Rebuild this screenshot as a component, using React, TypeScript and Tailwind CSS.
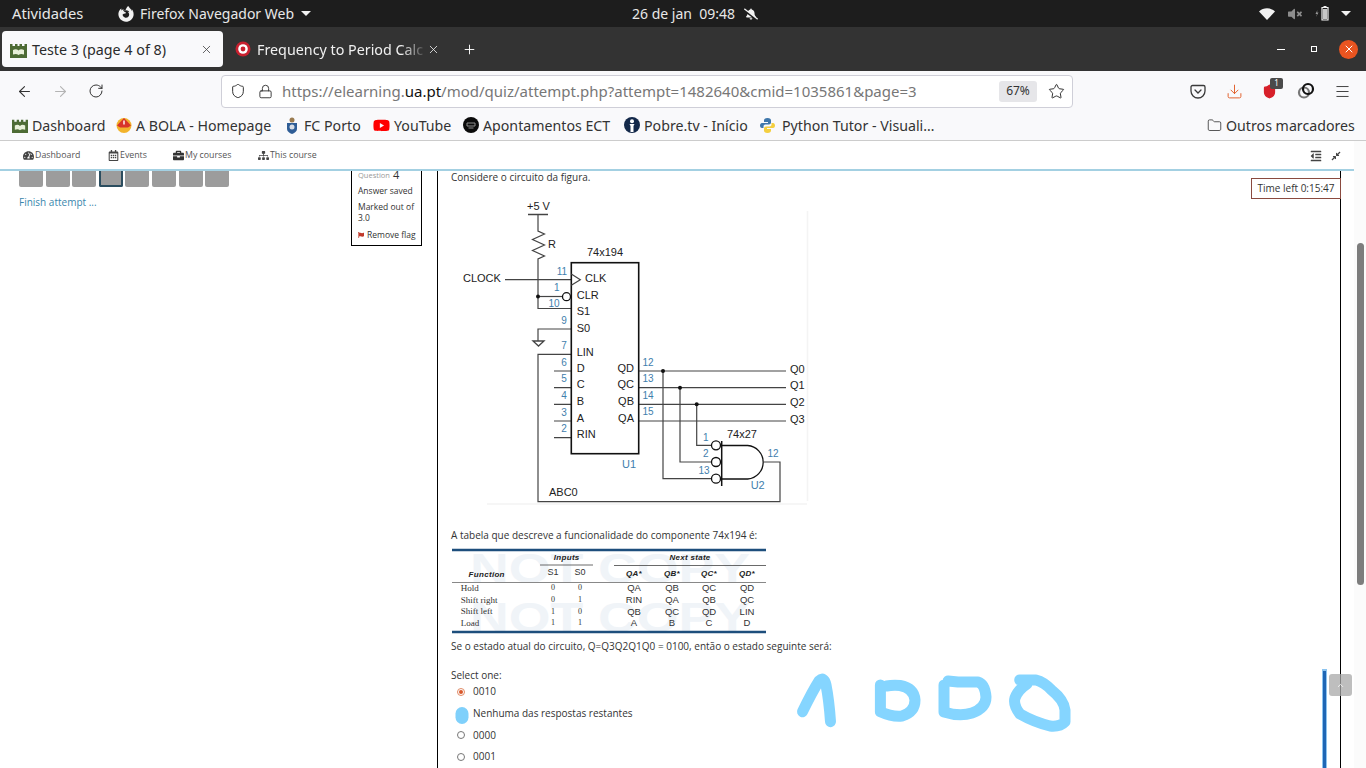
import React from "react";
import { ArrowLeft, ArrowRight, RotateCw, Shield, Lock, Star, Download, Menu, X, Plus, Folder, ChevronUp } from "lucide-react";
import { FaTachometerAlt, FaRegCalendarAlt, FaBriefcase, FaSitemap, FaOutdent, FaCompressAlt, FaFirefoxBrowser, FaVolumeMute, FaBellSlash, FaYoutube, FaFlag } from "react-icons/fa";

const MoodleIcon = ({ size = 17 }: { size?: number }) => (
  <svg width={size} height={size} viewBox="0 0 17 17">
    <path d="M0 3h2.500v2H5V3h2.500v2h2V3H12v2h2.500V3H17v14H0z" fill="#4d6b34" />
    <path d="M3 9c2-1 4-1 5.500 0.500C10 8 12 8 14 9v4.500c-2-.8-4-.8-5.500.5-1.500-1.300-3.500-1.300-5.500-.5z" fill="#e8efd8" />
  </svg>
);

const TargetIcon = () => (
  <svg width="16" height="16" viewBox="0 0 16 16">
    <circle cx="8" cy="8" r="7.500" fill="#c8202f" />
    <circle cx="8" cy="8" r="4.800" fill="#fff" />
    <circle cx="8" cy="8" r="2.400" fill="#c8202f" />
  </svg>
);

const BolaIcon = () => (
  <svg width="16" height="16" viewBox="0 0 16 16">
    <circle cx="8" cy="8.500" r="7.500" fill="#f2b32c" />
    <path d="M1 8.500 8 1l7 7.500-3 2H4z" fill="#d8352a" />
    <path d="M7.300 3.500h1.400v4H7.300z" fill="#fff" />
  </svg>
);

const PortoIcon = () => (
  <svg width="12" height="17" viewBox="0 0 12 17">
    <circle cx="6" cy="3" r="2.500" fill="#9a7b50" />
    <path d="M1 6h10v6c0 2.500-2.500 4-5 5-2.500-1-5-2.500-5-5z" fill="#2f5d96" />
    <circle cx="6" cy="10" r="2.500" fill="#d7dde6" />
  </svg>
);

const ApontamentosIcon = () => (
  <svg width="16" height="16" viewBox="0 0 16 16">
    <circle cx="8" cy="8" r="8" fill="#0b0b0b" />
    <path d="M4 6h8v3H4zM5.500 11h5" stroke="#8d8d8d" strokeWidth="1" fill="none" />
  </svg>
);

const PobreIcon = () => (
  <svg width="16" height="16" viewBox="0 0 16 16">
    <circle cx="8" cy="8" r="8" fill="#14294a" />
    <circle cx="8" cy="4.200" r="2" fill="#fff" />
    <path d="M5.500 7h5l-1 2v6h-3V9z" fill="#fff" />
  </svg>
);

const PythonIcon = () => (
  <svg width="17" height="17" viewBox="0 0 17 17">
    <path d="M8.500 1C6 1 5 2 5 3.500V5h4v1H3C1.500 6 1 7.500 1 8.500S1.500 11 3 11h1.500V9.500C4.500 8 5.500 7.500 7 7.500h3c1 0 2-.8 2-2v-2C12 2 11 1 8.500 1z" fill="#3f77ab" />
    <path d="M8.500 16c2.500 0 3.500-1 3.500-2.500V12H8v-1h6c1.500 0 2-1.500 2-2.500S15.500 6 14 6h-1.500v1.500c0 1.500-1 2-2.500 2H7c-1 0-2 .8-2 2v2C5 15 6 16 8.500 16z" fill="#f4cf3f" />
  </svg>
);

const PocketIcon = () => (
  <svg width="16" height="15" viewBox="0 0 16 15" fill="none" stroke="#3a3a3a" strokeWidth="1.300">
    <path d="M2.500 1.500h11a1.500 1.500 0 0 1 1.500 1.500v4a7 7 0 0 1-14 0V3a1.500 1.500 0 0 1 1.500-1.500z" />
    <path d="M5 6l3 3 3-3" strokeLinecap="round" />
  </svg>
);

const LinkedCircles = () => (
  <svg width="18" height="18" viewBox="0 0 18 18" fill="none" strokeWidth="2.200">
    <circle cx="7" cy="10.500" r="5" stroke="#777" />
    <circle cx="11" cy="7" r="5" stroke="#111" />
  </svg>
);

const WifiIcon = () => (
  <svg width="16" height="12" viewBox="0 0 16 12">
    <path d="M0 3.500C4.500-.8 11.500-.8 16 3.500L8 12z" fill="#f2f2f2" />
  </svg>
);

const BatteryIcon = () => (
  <svg width="16" height="15" viewBox="0 0 16 15">
    <path d="M2.500 4 0.500 8h1.500L1 11l2.500-4.500H2z" fill="#9a9a9a" />
    <path d="M7 1.500h6V14H7z" fill="none" stroke="#f2f2f2" strokeWidth="1.200" />
    <path d="M8.500 0h3v1.500h-3z" fill="#f2f2f2" />
    <path d="M8 3h4v10H8z" fill="#f2f2f2" opacity="0.800" />
  </svg>
);

const Caret = () => <span className="inline-block border-x-[5px] border-t-[5px] border-x-transparent border-t-[#f2f2f2]" />;

const Pin = ({ x, y, n }: { x: number; y: number; n: string }) => (
  <text x={x} y={y} textAnchor="middle" dominantBaseline="middle" fontSize="10" fill="#3f80ad">{n}</text>
);

const Lbl = ({ x, y, t, end }: { x: number; y: number; t: string; end?: boolean }) => (
  <text x={x} y={y} textAnchor={end ? "end" : "start"} dominantBaseline="middle" fontSize="11" fill="#222">{t}</text>
);

const Circuit = () => (
  <svg width="370" height="320" viewBox="451 190 370 320" className="block -mt-px" fontFamily="'Liberation Sans', Arial, sans-serif">
    <path d="M807.500 210v290M487 503h320" stroke="#f4f4f4" strokeWidth="1.500" fill="none" />
    <g fill="none" stroke="#444" strokeWidth="1.200">
      <path d="M528 213.500h20" strokeWidth="1.500" />
      <path d="M538 213v17l6.500 3-12 5.500 12 5.500-12 5.500 12 5.500-6.500 3v49.500h33" />
      <path d="M538 295.500h24" />
      <path d="M505 278.700h66" />
      <path d="M571 328h-33v12" />
      <path d="M533 340h11l-5.500 5z" strokeWidth="1.300" />
      <path d="M571 353.300h-33v147.400h242V461h-16" />
      <path d="M554 370h17M554 386.700h17M554 403.300h17M554 420h17M554 436.700h17" />
      <path d="M638.700 370H786M638.700 386.700H786M638.700 403.300H786M638.700 420H786" />
      <path d="M663 370v107.700h48.500M680 386.700V461h31.500M696.700 403.300v41h14.800" />
      <rect x="571.300" y="261.700" width="67.400" height="191" stroke="#111" strokeWidth="1.600" />
      <path d="M571.300 273l9 5.700-9 5.500" />
      <circle cx="566.500" cy="295.700" r="4" stroke="#111" strokeWidth="1.300" />
      <circle cx="716" cy="444.300" r="4.500" stroke="#111" strokeWidth="1.300" />
      <circle cx="716" cy="461" r="4.500" stroke="#111" strokeWidth="1.300" />
      <circle cx="716" cy="477.700" r="4.500" stroke="#111" strokeWidth="1.300" />
      <path d="M721.700 440v45" stroke="#111" strokeWidth="1.500" />
      <path d="M721.700 444.500h26a16.800 16.800 0 0 1 0 33.500h-26" stroke="#111" strokeWidth="1.300" />
    </g>
    <g fill="#111">
      <circle cx="538" cy="295.500" r="2" />
      <circle cx="663" cy="370" r="2" />
      <circle cx="680" cy="386.700" r="2" />
      <circle cx="696.700" cy="403.300" r="2" />
    </g>
    <Lbl x={527} y={206} t="+5 V" />
    <Lbl x={548} y={244} t="R" />
    <Lbl x={587} y={252} t="74x194" />
    <Lbl x={463} y={278} t="CLOCK" />
    <Lbl x={585} y={278} t="CLK" />
    <Lbl x={576.700} y={295} t="CLR" />
    <Lbl x={576.700} y={311.500} t="S1" />
    <Lbl x={576.700} y={328} t="S0" />
    <Lbl x={576.700} y={352} t="LIN" />
    <Lbl x={576.700} y={368} t="D" />
    <Lbl x={576.700} y={384.500} t="C" />
    <Lbl x={576.700} y={401} t="B" />
    <Lbl x={576.700} y={418} t="A" />
    <Lbl x={576.700} y={434.500} t="RIN" />
    <Lbl x={634} y={368} t="QD" end />
    <Lbl x={634} y={384.500} t="QC" end />
    <Lbl x={634} y={401} t="QB" end />
    <Lbl x={634} y={418} t="QA" end />
    <Lbl x={790} y={369.500} t="Q0" />
    <Lbl x={790} y={385.500} t="Q1" />
    <Lbl x={790} y={402} t="Q2" />
    <Lbl x={790} y={419} t="Q3" />
    <Lbl x={727} y={434} t="74x27" />
    <Lbl x={549} y={492} t="ABC0" />
    <text x={629} y={464} textAnchor="middle" dominantBaseline="middle" fontSize="11" fill="#3f80ad">U1</text>
    <text x={757.700} y={485} textAnchor="middle" dominantBaseline="middle" fontSize="11" fill="#3f80ad">U2</text>
    <Pin x={562} y={271} n="11" />
    <Pin x={556.700} y={287} n="1" />
    <Pin x={554} y={303.700} n="10" />
    <Pin x={564} y={320} n="9" />
    <Pin x={564} y={345} n="7" />
    <Pin x={564} y={362} n="6" />
    <Pin x={564} y={378} n="5" />
    <Pin x={564} y={395} n="4" />
    <Pin x={564} y={412} n="3" />
    <Pin x={564} y={428} n="2" />
    <Pin x={648} y={362} n="12" />
    <Pin x={648} y={378} n="13" />
    <Pin x={648} y={395} n="14" />
    <Pin x={648} y={411} n="15" />
    <Pin x={705.700} y={437} n="1" />
    <Pin x={705.700} y={453} n="2" />
    <Pin x={704} y={470} n="13" />
    <Pin x={773} y={453} n="12" />
  </svg>
);

const tableRows = [
  { y: 588.500, f: "Hold", s: ["0", "0"], q: ["QA", "QB", "QC", "QD"] },
  { y: 600.500, f: "Shift right", s: ["0", "1"], q: ["RIN", "QA", "QB", "QC"] },
  { y: 612, f: "Shift left", s: ["1", "0"], q: ["QB", "QC", "QD", "LIN"] },
  { y: 623.500, f: "Load", s: ["1", "1"], q: ["A", "B", "C", "D"] },
];
const sCols = [553, 580];
const qCols = [634, 672, 709, 747];

const FunctionTable = () => (
  <svg width="330" height="90" viewBox="451 546 330 90" className="block mt-[5px]" fontFamily="'Liberation Sans', Arial, sans-serif">
    <g fontSize="42" fontWeight="700" fill="#f0f4f8">
      <text x="470" y="583" textLength="280" lengthAdjust="spacingAndGlyphs">NOT COPY</text>
      <text x="470" y="632" textLength="280" lengthAdjust="spacingAndGlyphs">NOT COPY</text>
    </g>
    <path d="M452 550h314M452 632h314" stroke="#1d4e7c" strokeWidth="2.500" />
    <path d="M540 565h53M614 565.500h152" stroke="#444" strokeWidth="0.800" />
    <path d="M452 582.500h314" stroke="#888" strokeWidth="1" />
    <g fontSize="8" fontWeight="700" fontStyle="italic" fill="#222" textAnchor="middle" dominantBaseline="middle" letterSpacing="0.300">
      <text x="566.700" y="557.500">Inputs</text>
      <text x="690" y="557.500">Next state</text>
      <text x="486.700" y="574.500">Function</text>
      {qCols.map((x, i) => (
        <text key={x} x={x} y="574">{["QA*", "QB*", "QC*", "QD*"][i]}</text>
      ))}
    </g>
    <g fontSize="9" fill="#333" textAnchor="middle" dominantBaseline="middle">
      <text x={sCols[0]} y="573">S1</text>
      <text x={sCols[1]} y="573">S0</text>
    </g>
    {tableRows.map((r) => (
      <g key={r.f} dominantBaseline="middle">
        <text x="460.700" y={r.y} fontSize="9" fontFamily="'Liberation Serif', serif" fill="#333">{r.f}</text>
        {r.s.map((v, i) => (
          <text key={i} x={sCols[i]} y={r.y} fontSize="8" textAnchor="middle" fontFamily="'Liberation Serif', serif" fill="#333">{v}</text>
        ))}
        {r.q.map((v, i) => (
          <text key={i} x={qCols[i]} y={r.y} fontSize="9.500" textAnchor="middle" fill="#333">{v}</text>
        ))}
      </g>
    ))}
  </svg>
);

const Radio = ({ selected }: { selected?: boolean }) => (
  <span className={`flex h-[8px] w-[8px] items-center justify-center rounded-full border bg-white ${selected ? "border-[#e08a66]" : "border-[#777]"}`}>
    {selected && <span className="h-[4px] w-[4px] rounded-full bg-[#d9582b]" />}
  </span>
);

const options = [
  { label: "0010", selected: true },
  { label: "Nenhuma das respostas restantes" },
  { label: "0000" },
  { label: "0001" },
];

const Bookmark = ({ icon, text, className }: { icon: React.ReactNode; text: string; className: string }) => (
  <div className={`flex items-center ${className}`}>
    {icon}
    <span>{text}</span>
  </div>
);

const NavItem = ({ icon, text, className }: { icon: React.ReactNode; text: string; className: string }) => (
  <div className={`flex items-center gap-[1px] ${className}`}>
    {icon}
    <span>{text}</span>
  </div>
);

export default function App() {
  const chrome = { fontFamily: "'Noto Sans', sans-serif" };
  return (
    <div className="relative flex h-[768px] w-[1366px] flex-col overflow-hidden bg-white" style={chrome}>
      {/* gnome top bar */}
      <div className="flex h-[27px] shrink-0 items-center bg-[#1d1d1d] text-[14px] text-[#e8e8e8]">
        <span className="ml-[12px] w-[72px] text-[14.700px]">Atividades</span>
        <FaFirefoxBrowser className="ml-[34px] text-[16px] text-[#f2f2f2]" />
        <span className="ml-[6px] w-[155px] whitespace-nowrap">Firefox Navegador Web</span>
        <span className="ml-[6px] flex"><Caret /></span>
        <span className="ml-[321px] w-[102px] whitespace-nowrap text-[14px]">26 de jan&nbsp;&nbsp;09:48</span>
        <FaBellSlash className="ml-[10px] text-[14px] text-[#f2f2f2]" />
        <span className="ml-auto"><WifiIcon /></span>
        <FaVolumeMute className="ml-[13px] text-[14px] text-[#8d8d8d]" />
        <span className="ml-[13px]"><BatteryIcon /></span>
        <span className="ml-[10px] mr-[15px] flex"><Caret /></span>
      </div>

      {/* tab strip */}
      <div className="flex h-[44px] shrink-0 items-center bg-[#333333] text-[14.300px]">
        <div className="ml-[2px] flex h-[36px] w-[221px] items-center rounded-[4px] bg-[#f9f9fb] pl-[8px] pr-[10px] text-[#2b2b2b]">
          <MoodleIcon />
          <span className="ml-[5px] flex-1 pt-px">Teste 3 (page 4 of 8)</span>
          <X size={13} strokeWidth={1.500} className="text-[#444]" />
        </div>
        <div className="ml-[12px] flex w-[212px] items-center text-[#f0f0f0]">
          <TargetIcon />
          <span className="ml-[6px] w-[170px] overflow-hidden whitespace-nowrap pt-px [mask-image:linear-gradient(to_right,black_85%,transparent)]">Frequency to Period Calc</span>
          <X size={13} strokeWidth={1.500} />
        </div>
        <Plus size={15} strokeWidth={1.500} className="ml-[15px] text-white" />
        <div className="ml-auto flex items-center">
          <span className="block h-[1px] w-[8px] bg-white" />
          <span className="relative ml-[26px] block h-[6px] w-[6px] border border-white" />
          <span className="ml-[22px] mr-[8px] flex h-[19px] w-[19px] items-center justify-center rounded-full bg-[#e95420] text-white">
            <X size={12} strokeWidth={2} />
          </span>
        </div>
      </div>

      {/* url toolbar */}
      <div className="flex h-[40px] shrink-0 items-center bg-[#f9f9fb] text-[#333]">
        <ArrowLeft size={17} strokeWidth={1.500} className="ml-[16px]" />
        <ArrowRight size={17} strokeWidth={1.500} className="ml-[19px] text-[#b4b4b4]" />
        <RotateCw size={16} strokeWidth={1.500} className="ml-[19px]" />
        <div className="ml-[117px] flex h-[33px] w-[852px] items-center rounded-[4px] border border-[#cfcfd8] bg-white">
          <Shield size={16} strokeWidth={1.500} className="ml-[8px]" />
          <Lock size={15} strokeWidth={1.500} className="ml-[12px]" />
          <span className="ml-[9px] whitespace-nowrap text-[15px] text-[#777]">
            https://elearning.<span className="text-[#111]">ua.pt</span>/mod/quiz/attempt.php?attempt=1482640&amp;cmid=1035861&amp;page=3
          </span>
          <span className="ml-auto flex h-[21px] w-[38px] items-center justify-center rounded-[3px] bg-[#e6e6e9] text-[12px]">67%</span>
          <Star size={17} strokeWidth={1.300} className="ml-[11px] mr-[7px] text-[#222]" />
        </div>
        <span className="ml-[117px]"><PocketIcon /></span>
        <Download size={17} strokeWidth={1.400} className="ml-[20px] text-[#e2622f]" />
        <div className="relative ml-[19px]">
          <Shield size={15} className="fill-[#d7202a] text-[#d7202a]" />
          <span className="absolute -right-[6px] -top-[6px] flex h-[11px] w-[13px] items-center justify-center rounded-[2px] bg-[#4a4a4a] text-[8px] text-white">1</span>
        </div>
        <span className="ml-[20px]"><LinkedCircles /></span>
        <Menu size={17} strokeWidth={1.300} className="ml-[19px]" />
      </div>

      {/* bookmarks */}
      <div className="flex h-[30px] shrink-0 items-center border-b border-[#cccccc] bg-[#f9f9fb] text-[14.200px] text-[#333]">
        <Bookmark icon={<MoodleIcon size={16} />} text="Dashboard" className="ml-[12px] w-[104px] gap-[4px]" />
        <Bookmark icon={<BolaIcon />} text="A BOLA - Homepage" className="w-[170px] gap-[4px]" />
        <Bookmark icon={<PortoIcon />} text="FC Porto" className="w-[87px] gap-[6px]" />
        <Bookmark icon={<FaYoutube className="text-[17px] text-[#f00]" />} text="YouTube" className="w-[90px] gap-[4px]" />
        <Bookmark icon={<ApontamentosIcon />} text="Apontamentos ECT" className="w-[161px] gap-[4px]" />
        <Bookmark icon={<PobreIcon />} text="Pobre.tv - Início" className="w-[135px] gap-[4px]" />
        <Bookmark icon={<PythonIcon />} text="Python Tutor - Visuali…" className="w-[200px] gap-[6px] whitespace-nowrap" />
        <Bookmark icon={<Folder size={15} strokeWidth={1.300} />} text="Outros marcadores" className="ml-[248px] gap-[4px] whitespace-nowrap" />
      </div>

      {/* moodle page */}
      <div className="flex min-h-0 flex-1" style={{ fontFamily: "'Open Sans', sans-serif" }}>
        <div className="flex w-[1354px] flex-col">
          <div className="flex h-[30px] shrink-0 items-center border-b-2 border-[#a3d0e2] pt-px text-[8.800px] text-[#555]">
            <NavItem icon={<FaTachometerAlt className="text-[11px] text-[#444]" />} text="Dashboard" className="ml-[23px] w-[85px]" />
            <NavItem icon={<FaRegCalendarAlt className="text-[11px] text-[#444]" />} text="Events" className="w-[65px]" />
            <NavItem icon={<FaBriefcase className="text-[11px] text-[#333]" />} text="My courses" className="w-[85px]" />
            <NavItem icon={<FaSitemap className="text-[11px] text-[#444]" />} text="This course" className="" />
            <FaOutdent className="ml-auto text-[12px] text-[#444]" />
            <FaCompressAlt className="ml-[9px] mr-[13px] text-[10px] text-[#444]" />
          </div>
          <div className="flex min-h-0 flex-1">
            <div className="w-[351px] shrink-0 pl-[19px]">
              <div className="flex gap-[2.600px]">
                {[0, 1, 2, 3, 4, 5, 6, 7].map((i) => (
                  <div key={i} className={`h-[16px] w-[24px] rounded-b-[2px] bg-[#9c9c9c] ${i === 3 ? "border-2 border-t-0 border-[#2b4d5f]" : ""}`} />
                ))}
              </div>
              <div className="mt-[9px] text-[10px] leading-[12px] text-[#3a87ad]">Finish attempt ...</div>
            </div>
            <div className="h-[75px] w-[71px] shrink-0 border border-t-0 border-black pl-[6px] text-[8.500px] text-[#333]">
              <div className="flex h-[9px] items-center gap-[3px] text-[#999]">
                <span className="text-[7.500px]">Question</span>
                <span className="text-[11px] text-[#333]">4</span>
              </div>
              <div className="mt-[5px] leading-[11px]">Answer saved</div>
              <div className="mt-[5px] leading-[11px]">Marked out of 3.0</div>
              <div className="mt-[6px] flex items-center gap-[3px] leading-[11px]">
                <FaFlag className="text-[6px] text-[#c0392b]" />
                <span>Remove flag</span>
              </div>
            </div>
            <div className="relative ml-[15px] w-[904px] shrink-0 border-x border-black pl-[13px] text-[10px] text-[#333]">
              <div className="leading-[12px]">Considere o circuito da figura.</div>
              <div className="mt-[9px]"><Circuit /></div>
              <div className="mt-[18px] leading-[12px]">A tabela que descreve a funcionalidade do componente 74x194 é:</div>
              <FunctionTable />
              <div className="mt-[4px] leading-[12px]">Se o estado atual do circuito, Q=Q3Q2Q1Q0 = 0100, então o estado seguinte será:</div>
              <div className="mt-[17px] h-[12px] leading-[12px]">Select one:</div>
              <div className="flex flex-col">
                {options.map((o) => (
                  <div key={o.label} className="flex h-[21.700px] items-center">
                    <span className="ml-[6px] mr-[8px] flex w-[8px]"><Radio selected={o.selected} /></span>
                    <span>{o.label}</span>
                  </div>
                ))}
              </div>
              <div className="absolute -right-px top-[7px] flex h-[21px] w-[90px] items-center justify-center border border-[#8a4a3f] bg-white">Time left 0:15:47</div>
            </div>
          </div>
        </div>
        <div className="w-[12px] shrink-0 bg-[#fbfbfb] pl-[3px] pt-[102px]">
          <div className="h-[342px] w-[7px] rounded-full bg-[#7d7d7d]" />
        </div>
      </div>

      {/* annotation drawn over the page */}
      <svg className="pointer-events-none absolute left-0 top-0" width="1366" height="768" fill="none" stroke="#85d5ff" strokeWidth="11" strokeLinecap="round" strokeLinejoin="round">
        <path d="M802.500 711.700Q812 692 819 681Q824 676 826 685Q829 700 830.500 721.700" />
        <path d="M880.400 685V711.700Q892 717 902 716Q915 712 915 700Q914 688 900 685.500Q892 685 886.700 686" />
        <path d="M944 685V712Q960 717 972 713Q986 708 986 697Q985 684 978 682H958L948 681" />
        <path d="M1019.700 680H1036Q1044 682 1051.500 690Q1064 700 1065 710V721.700Q1060 727 1050 726Q1034 722 1020 714Q1013 705 1015 698Q1018 690 1027 684" />
        <rect x="455.500" y="707" width="13" height="17" rx="6.500" fill="#7fd0fb" stroke="none" />
      </svg>
      <div className="absolute left-[1322px] top-[669px] flex h-[99px] w-[5px] justify-center bg-[#8cc4f0]">
        <div className="mt-[2px] w-[3px] bg-[#1f66b5]" />
      </div>
      <div className="absolute left-[1329px] top-[674px] flex h-[22px] w-[23px] items-center justify-center rounded-[3px] bg-[#a8a8a8]/75 text-white">
        <ChevronUp size={9} strokeWidth={2} />
      </div>
    </div>
  );
}
